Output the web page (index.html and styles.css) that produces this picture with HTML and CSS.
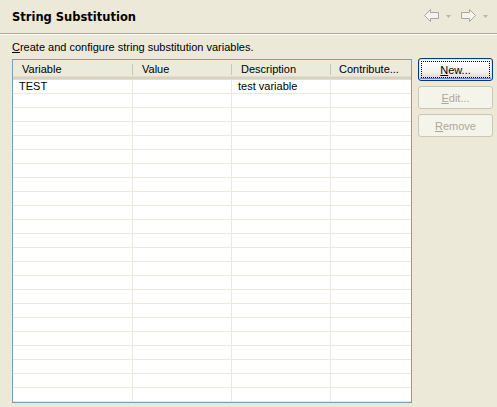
FILE: index.html
```html
<!DOCTYPE html>
<html>
<head>
<meta charset="utf-8">
<link rel="stylesheet" href="styles.css">
</head>
<body>
<div class="page">
  <div class="header">
    <div class="title">String Substitution</div>
    <div class="nav">
      <svg class="arrow" width="15" height="14" viewBox="0 0 15 14"><polygon points="0.5,6.5 6.5,0.5 6.5,3.5 14.5,3.5 14.5,9.5 6.5,9.5 6.5,12.5" fill="#F4F3EE" stroke="#A9A89F" stroke-linejoin="round"/></svg>
      <svg class="drop" width="5" height="3" viewBox="0 0 5 3"><polygon points="0,0 5,0 2.5,3" fill="#B8B6AC"/></svg>
      <svg class="arrow fwd" width="15" height="14" viewBox="0 0 15 14"><polygon points="14.5,6.5 8.5,0.5 8.5,3.5 0.5,3.5 0.5,9.5 8.5,9.5 8.5,12.5" fill="#F4F3EE" stroke="#A9A89F" stroke-linejoin="round"/></svg>
      <svg class="drop" width="5" height="3" viewBox="0 0 5 3"><polygon points="0,0 5,0 2.5,3" fill="#B8B6AC"/></svg>
    </div>
  </div>
  <div class="sep"></div>
  <div class="desc"><u>C</u>reate and configure string substitution variables.</div>
  <div class="main">
    <div class="table">
      <div class="thead">
        <div class="th c1">Variable</div>
        <div class="th c2">Value</div>
        <div class="th c3">Description</div>
        <div class="th c4">Contribute...</div>
      </div>
      <div class="tbody">
        <div class="tr"><div class="td c1">TEST</div><div class="td c2"></div><div class="td c3">test variable</div><div class="td c4"></div></div>
        <div class="tr"><div class="td c1"></div><div class="td c2"></div><div class="td c3"></div><div class="td c4"></div></div>
        <div class="tr"><div class="td c1"></div><div class="td c2"></div><div class="td c3"></div><div class="td c4"></div></div>
        <div class="tr"><div class="td c1"></div><div class="td c2"></div><div class="td c3"></div><div class="td c4"></div></div>
        <div class="tr"><div class="td c1"></div><div class="td c2"></div><div class="td c3"></div><div class="td c4"></div></div>
        <div class="tr"><div class="td c1"></div><div class="td c2"></div><div class="td c3"></div><div class="td c4"></div></div>
        <div class="tr"><div class="td c1"></div><div class="td c2"></div><div class="td c3"></div><div class="td c4"></div></div>
        <div class="tr"><div class="td c1"></div><div class="td c2"></div><div class="td c3"></div><div class="td c4"></div></div>
        <div class="tr"><div class="td c1"></div><div class="td c2"></div><div class="td c3"></div><div class="td c4"></div></div>
        <div class="tr"><div class="td c1"></div><div class="td c2"></div><div class="td c3"></div><div class="td c4"></div></div>
        <div class="tr"><div class="td c1"></div><div class="td c2"></div><div class="td c3"></div><div class="td c4"></div></div>
        <div class="tr"><div class="td c1"></div><div class="td c2"></div><div class="td c3"></div><div class="td c4"></div></div>
        <div class="tr"><div class="td c1"></div><div class="td c2"></div><div class="td c3"></div><div class="td c4"></div></div>
        <div class="tr"><div class="td c1"></div><div class="td c2"></div><div class="td c3"></div><div class="td c4"></div></div>
        <div class="tr"><div class="td c1"></div><div class="td c2"></div><div class="td c3"></div><div class="td c4"></div></div>
        <div class="tr"><div class="td c1"></div><div class="td c2"></div><div class="td c3"></div><div class="td c4"></div></div>
        <div class="tr"><div class="td c1"></div><div class="td c2"></div><div class="td c3"></div><div class="td c4"></div></div>
        <div class="tr"><div class="td c1"></div><div class="td c2"></div><div class="td c3"></div><div class="td c4"></div></div>
        <div class="tr"><div class="td c1"></div><div class="td c2"></div><div class="td c3"></div><div class="td c4"></div></div>
        <div class="tr"><div class="td c1"></div><div class="td c2"></div><div class="td c3"></div><div class="td c4"></div></div>
        <div class="tr"><div class="td c1"></div><div class="td c2"></div><div class="td c3"></div><div class="td c4"></div></div>
        <div class="tr"><div class="td c1"></div><div class="td c2"></div><div class="td c3"></div><div class="td c4"></div></div>
        <div class="tr"><div class="td c1"></div><div class="td c2"></div><div class="td c3"></div><div class="td c4"></div></div>
        <div class="tr"><div class="td c1"></div><div class="td c2"></div><div class="td c3"></div><div class="td c4"></div></div>
      </div>
    </div>
    <div class="buttons">
      <button class="btn default"><span class="focus"><u>N</u>ew...</span></button>
      <button class="btn disabled"><u>E</u>dit...</button>
      <button class="btn disabled"><u>R</u>emove</button>
    </div>
  </div>
</div>
</body>
</html>
```

FILE: styles.css
```css
html, body {
  margin: 0;
  padding: 0;
  background: #ECE9D8;
}
body {
  font-family: "Liberation Sans", "DejaVu Sans", sans-serif;
  font-size: 11px;
  color: #000;
}
.page {
  width: 497px;
  height: 407px;
  overflow: hidden;
}
.header {
  height: 33px;
  display: flex;
  align-items: flex-start;
  justify-content: space-between;
  box-sizing: border-box;
  padding: 0 0 0 12px;
}
.title {
  font-family: "DejaVu Sans", sans-serif;
  font-weight: bold;
  font-size: 11.5px;
  line-height: 14px;
  margin-top: 10px;
}
.nav {
  display: flex;
  align-items: center;
  margin-top: 9px;
  margin-right: 9px;
}
.arrow { display: block; }
.nav .arrow:first-child { margin-right: 7px; }
.drop { display: block; margin-top: 1px; }
.fwd { margin-left: 10px; margin-right: 7px; }
.sep {
  height: 0;
  border-top: 1px solid #ACA899;
  border-bottom: 1px solid #FFFFFF;
}
.desc {
  padding-left: 12px;
  margin-top: 6px;
  line-height: 13px;
  height: 13px;
}
.main {
  display: flex;
  padding-left: 12px;
  margin-top: 5px;
  gap: 6px;
}
.table {
  width: 400px;
  height: 344px;
  box-sizing: border-box;
  border: 1px solid #7F9DB9;
  background: #FFFFFF;
  overflow: hidden;
  display: flex;
  flex-direction: column;
}
.thead {
  display: flex;
  height: 20px;
  flex: none;
  box-sizing: border-box;
  background: #EBEADB;
  border-bottom: 1px solid #E2DECD;
  box-shadow: inset 0 -2px 0 #D6D2C2, inset 0 -3px 0 #E2DECD;
}
.th {
  position: relative;
  box-sizing: border-box;
  padding-left: 9px;
  line-height: 19px;
  white-space: nowrap;
  overflow: hidden;
}
.th.c4 { padding-left: 8px; }
.th::after {
  content: "";
  position: absolute;
  right: 0;
  top: 4px;
  bottom: 4px;
  width: 1px;
  background: #C7C5B2;
  box-shadow: 1px 0 0 #FFFFFF;
}
.th.c4::after { display: none; }
.c1 { width: 120px; flex: none; }
.c2 { width: 99px; flex: none; }
.c3 { width: 99px; flex: none; }
.c4 { flex: 1; }
.tbody {
  flex: 1;
  overflow: hidden;
}
.tr {
  display: flex;
  height: 14px;
  box-sizing: border-box;
  border-bottom: 1px solid #EBE9DC;
}
.td {
  box-sizing: border-box;
  height: 13px;
  line-height: 13px;
  padding-left: 6px;
  border-right: 1px solid #EBE9DC;
  white-space: nowrap;
  overflow: hidden;
}
.td.c4 { border-right: none; }
.buttons {
  display: flex;
  flex-direction: column;
  gap: 5px;
  width: 75px;
  margin-top: -1px;
}
.btn {
  width: 75px;
  height: 23px;
  box-sizing: border-box;
  font-family: inherit;
  font-size: 11px;
  border-radius: 3px;
  padding: 0;
  margin: 0;
  display: flex;
  align-items: center;
  justify-content: center;
}
.btn.default {
  border: 1px solid #003C74;
  background: linear-gradient(#FFFFFF, #F4F3EE 60%, #D6D0C5);
  box-shadow: inset 0 0 0 1px #CEE7FF, inset 0 -1px 0 1px #6982EE;
  color: #000;
  padding: 2px;
}
.focus {
  display: flex;
  align-items: center;
  justify-content: center;
  width: 100%;
  height: 100%;
  box-sizing: border-box;
  border: 1px dotted #000;
}
.btn.disabled {
  border: 1px solid #C9C7BA;
  background: #F5F4EA;
  color: #ACA899;
}
```
